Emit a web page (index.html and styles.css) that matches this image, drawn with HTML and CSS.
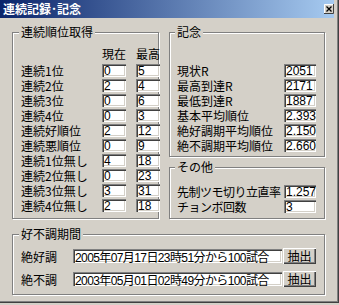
FILE: index.html
```html
<!DOCTYPE html>
<html lang="ja">
<head>
    <meta charset="UTF-8">
    <meta name="viewport" content="width=device-width, initial-scale=1.0">
    <title>連続記録･記念</title>
    <link rel="stylesheet" href="styles.css">
</head>
<body>
<div class="window">
    <div class="titlebar">
        <span class="title">連続記録･記念</span>
        <svg class="close" width="10" height="10" viewBox="0 0 10 10">
            <rect width="10" height="10" fill="#d4d0c8"/>
            <path d="M0.5 9V0.5H9" fill="none" stroke="#fff"/>
            <path d="M0 9.5H9.5V0" fill="none" stroke="#404040"/>
            <path d="M2.5 2.5L7.5 7.5M7.5 2.5L2.5 7.5" stroke="#000" stroke-width="1.3"/>
        </svg>
    </div>

    <div class="client">
        <div class="top">
            <div class="group rank">
                <span class="legend">連続順位取得</span>
                <div class="rank-grid">
                    <span></span><span class="head">現在</span><span class="head">最高</span>

                    <span class="label">連続1位</span>
                    <input class="field" value="0" readonly><input class="field" value="5" readonly>
                    <span class="label">連続2位</span>
                    <input class="field" value="2" readonly><input class="field" value="4" readonly>
                    <span class="label">連続3位</span>
                    <input class="field" value="0" readonly><input class="field" value="6" readonly>
                    <span class="label">連続4位</span>
                    <input class="field" value="0" readonly><input class="field" value="3" readonly>
                    <span class="label">連続好順位</span>
                    <input class="field" value="2" readonly><input class="field" value="12" readonly>
                    <span class="label">連続悪順位</span>
                    <input class="field" value="0" readonly><input class="field" value="9" readonly>
                    <span class="label">連続1位無し</span>
                    <input class="field" value="4" readonly><input class="field" value="18" readonly>
                    <span class="label">連続2位無し</span>
                    <input class="field" value="0" readonly><input class="field" value="23" readonly>
                    <span class="label">連続3位無し</span>
                    <input class="field" value="3" readonly><input class="field" value="31" readonly>
                    <span class="label">連続4位無し</span>
                    <input class="field" value="2" readonly><input class="field" value="18" readonly>
                </div>
            </div>

            <div class="side">
                <div class="group record">
                    <span class="legend">記念</span>
                    <div class="side-grid">
                        <span class="label">現状R</span>
                        <input class="field wide" value="2051" readonly>
                        <span class="label">最高到達R</span>
                        <input class="field wide" value="2171" readonly>
                        <span class="label">最低到達R</span>
                        <input class="field wide" value="1887" readonly>
                        <span class="label">基本平均順位</span>
                        <input class="field wide" value="2.3934" readonly>
                        <span class="label">絶好調期平均順位</span>
                        <input class="field wide" value="2.1500" readonly>
                        <span class="label">絶不調期平均順位</span>
                        <input class="field wide" value="2.6600" readonly>
                    </div>
                </div>

                <div class="group other">
                    <span class="legend">その他</span>
                    <div class="side-grid">
                        <span class="label tight">先制ツモ切り立直率</span>
                        <input class="field wide" value="1.2578" readonly>
                        <span class="label tight">チョンボ回数</span>
                        <input class="field wide" value="3" readonly>
                    </div>
                </div>
            </div>
        </div>

        <div class="group period">
            <span class="legend">好不調期間</span>
            <div class="period-grid">
                <span class="label">絶好調</span>
                <input class="field long" value="2005年07月17日23時51分から100試合" readonly>
                <button class="btn">抽出</button>
                <span class="label">絶不調</span>
                <input class="field long" value="2003年05月01日02時49分から100試合" readonly>
                <button class="btn">抽出</button>
            </div>
        </div>
    </div>
</div>
</body>
</html>
```

FILE: styles.css
```css
body{margin: 0; background-color: #d4d0c8;
font-family: "Noto Sans CJK JP", sans-serif; font-size: 12px; color: #000;}

.window{width: 339px; height: 303px; box-sizing: border-box;
border-right: 1px solid #404040; border-bottom: 1px solid #404040;
box-shadow: inset -1px -1px 0 #808080;}

.titlebar{width: 334px; height: 18px; box-sizing: border-box; padding: 0 0 0 3px;
display: flex; align-items: center; justify-content: space-between;
background: linear-gradient(to right, #0a246a, #a6caf0);}
.title{color: #fff; font-weight: bold; line-height: 18px;}
.close{display: block;}

.client{padding: 14px 0 0 12px;}
.top{display: flex; align-items: flex-start; gap: 10px;}
.side{display: flex; flex-direction: column; gap: 10px;}

/* etched group box */
.group{position: relative; box-sizing: border-box;
border: 1px solid #808080;
box-shadow: inset 1px 1px 0 #fff, 1px 1px 0 #fff;}
.legend{position: absolute; top: -9px; left: 6px; padding: 0 2px;
line-height: 15px; background-color: #d4d0c8; white-space: nowrap;}

.rank{width: 147px; height: 187px; padding: 13px 0 0 8px;}
.record{width: 156px; height: 125px; padding: 30px 0 0 7px;}
.record .legend{left: 5px;}
.other{width: 156px; height: 52px; padding: 16px 0 0 7px;}
.other .legend{left: 5px;}
.period{width: 313px; height: 61px; margin-top: 15px; padding: 13px 0 0 8px;}

.rank-grid{display: grid; grid-template-columns: 71px 24px 24px;
grid-template-rows: 17px repeat(10, 15px); column-gap: 10px;}
.head{line-height: 15px; text-align: center; align-self: start;}
.label{line-height: 15px; white-space: nowrap; align-self: center;}
.tight{letter-spacing: -0.5px;}

.side-grid{display: grid; grid-template-columns: 107px 32px; grid-auto-rows: 15px;}

.period-grid{display: grid; grid-template-columns: 52px 210px 33px;
grid-template-rows: 16px 16px; row-gap: 7px;}

/* sunken edit box */
.field{box-sizing: border-box; width: 24px; height: 13px; margin: 0;
border: 0; padding: 0 0 0 2px; outline: none; align-self: center;
background-color: #fff; color: #000;
font-family: "Liberation Sans", "Noto Sans CJK JP", sans-serif; font-size: 12px;
box-shadow: inset 1px 1px 0 #808080, inset 2px 2px 0 #404040,
inset -1px -1px 0 #fff, inset -2px -2px 0 #d4d0c8;}
.wide{width: 32px;}
.long{width: 209px; height: 14px; letter-spacing: -0.6px;}

.btn{box-sizing: border-box; width: 33px; height: 16px; margin: 0; padding: 0;
border: 0; background-color: #d4d0c8; color: #000;
font-family: "Noto Sans CJK JP", sans-serif; font-size: 12px; line-height: 14px;
box-shadow: inset 1px 1px 0 #fff, inset -1px -1px 0 #404040, inset -2px -2px 0 #808080;}
```
